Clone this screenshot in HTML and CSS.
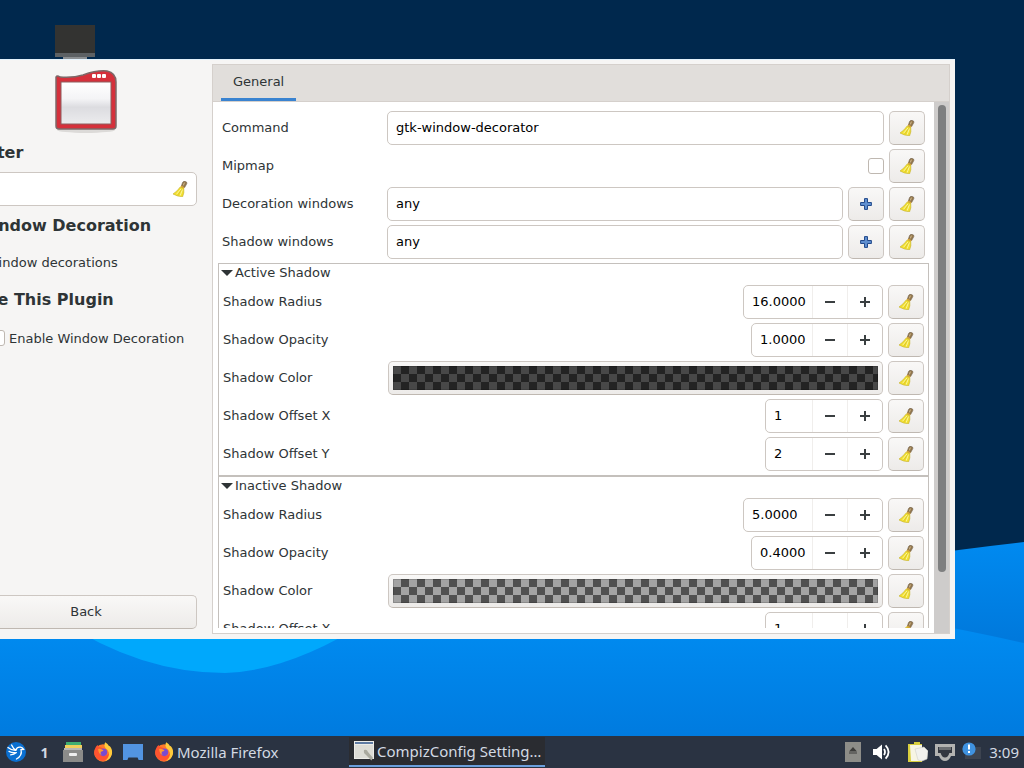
FILE: index.html
```html
<!DOCTYPE html>
<html lang="en">
<head>
    <meta charset="UTF-8">
    <meta name="viewport" content="width=device-width, initial-scale=1.0">
    <title>CompizConfig Settings Manager</title>
    <link rel="stylesheet" href="styles.css">
</head>
<body>

<!-- shared icons -->
<svg class="icon-defs" aria-hidden="true">
    <symbol id="broom" viewBox="0 0 16 16">
        <path d="M10.6 1.4 Q11.6 0 13.4 .4 Q15.2 .8 14.8 2.6 L12.6 6.6 L9.4 5 Z" fill="#94784c" stroke="#6b5a45" stroke-width=".6"/>
        <path d="M12.4 1.6 L11.4 4.4" stroke="#d9c39a" stroke-width=".9"/>
        <path d="M9.3 4.4 L12.6 6.2 L11.8 7.8 L8.2 6.2 Z" fill="#d8a53a"/>
        <path d="M8.2 6 L11.8 7.6 Q12.4 12 10.6 15.8 Q5 15.4 1 13 Q5.2 10.4 8.2 6 Z" fill="#f2df2e" stroke="#c2ae2a" stroke-width=".6"/>
        <path d="M9 8 L4.6 13.2 M10.4 8.6 L8.2 14.6" stroke="#fbf6a0" stroke-width="1"/>
        <path d="M9.6 8.4 L6 13.8" stroke="#c9b022" stroke-width=".5"/>
    </symbol>
    <symbol id="add" viewBox="0 0 12 12">
        <path d="M4.5 .6 H7.5 V4.5 H11.4 V7.5 H7.5 V11.4 H4.5 V7.5 H.6 V4.5 H4.5 Z" fill="#5f8fd0" stroke="#234a8c" stroke-linejoin="round"/>
    </symbol>
    <symbol id="minus" viewBox="0 0 12 12"><path d="M1 6 H11" stroke="#3a3f41" stroke-width="2"/></symbol>
    <symbol id="plus" viewBox="0 0 12 12"><path d="M1 6 H11 M6 1 V11" stroke="#3a3f41" stroke-width="2"/></symbol>
    <symbol id="firefox" viewBox="0 0 22 22">
        <circle cx="11" cy="12" r="9.6" fill="#ff7a2a"/>
        <path d="M2 8 Q3 5 5 3.4 Q5.4 5 7 5.6 Q10 6 12 8 Q8 8 8 10.4 Q8 14 12 15 Q17 15 18 11 Q18 18 12 20.6 Q4 21 1.6 14 Q1 10 2 8 Z" fill="#ff5430"/>
        <path d="M13.4 .4 Q16.4 2 17.6 4.4 L18.6 4.6 Q21.8 8.4 20.8 13.6 Q19 19.6 13.4 21 Q18.4 17 17.4 11.6 Q16.4 8.4 13.8 7 Q11.6 4 13.4 .4 Z" fill="#ffcb3c"/>
        <circle cx="11.4" cy="11.4" r="4.2" fill="#7a4bd0"/>
        <path d="M5.6 7.6 Q9 7 11.6 9.2 Q10.6 10.6 8.6 10.8 Q7.6 12.4 9.4 14 Q6 13.4 5.6 7.6 Z" fill="#ff9a2e"/>
    </symbol>
</svg>

<main class="desktop">
    <svg class="wallpaper" viewBox="0 0 1024 736" preserveAspectRatio="none" aria-hidden="true">
        <defs>
            <linearGradient id="sea" x1="0" y1="0" x2="0" y2="1">
                <stop offset="0" stop-color="#008ff5"/>
                <stop offset="1" stop-color="#007bdf"/>
            </linearGradient>
            <linearGradient id="ridge" x1="0" y1="0" x2="0" y2="1">
                <stop offset="0" stop-color="#008af0"/>
                <stop offset="1" stop-color="#0068c8"/>
            </linearGradient>
        </defs>
        <rect width="1024" height="736" fill="#00284d"/>
        <path d="M600 610 Q860 560 1024 542 V736 H600 Z" fill="url(#ridge)"/>
        <path d="M0 600 H800 Q930 622 1024 643 V736 H0 Z" fill="url(#sea)"/>
        <path d="M60 620 Q140 673 225 673 Q290 671 370 620 Z" fill="#00a8fc"/>
    </svg>

    <svg class="computer" viewBox="0 0 40 34" aria-hidden="true">
        <rect width="40" height="30" fill="#333331"/>
        <rect y="28" width="40" height="4" fill="#5d6164"/>
        <rect x="8" y="32" width="24" height="2" fill="#8b8f92"/>
    </svg>

    <section class="window">
        <aside class="sidebar">
            <svg class="plugin-icon" viewBox="0 0 62 64" aria-hidden="true">
                <defs>
                    <linearGradient id="pane" x1="0" y1="0" x2="0" y2="1">
                        <stop offset="0" stop-color="#ffffff"/>
                        <stop offset=".4" stop-color="#f4f4f6"/>
                        <stop offset=".6" stop-color="#dcdce0"/>
                        <stop offset="1" stop-color="#ececee"/>
                    </linearGradient>
                </defs>
                <ellipse cx="31" cy="60" rx="29" ry="3" fill="#dcdad8"/>
                <path d="M1 7 Q2 5 5 7 Q18 8 28 5 Q42 0 52 1 Q61 3 61 12 V56 Q61 59 58 59 H4 Q1 59 1 56 Z" fill="#d5303b" stroke="#7d6868" stroke-width="1.5"/>
                <rect x="6" y="12" width="50" height="42" fill="url(#pane)" stroke="#8d5c5e"/>
                <rect x="37" y="4" width="4" height="4" rx="1" fill="#fff"/>
                <rect x="42" y="4" width="4" height="4" rx="1" fill="#fff"/>
                <rect x="47" y="4" width="4" height="4" rx="1" fill="#fff"/>
            </svg>
            <h2><label for="filter">Filter</label></h2>
            <div class="filter-box">
                <input type="text" id="filter">
                <button class="clear" aria-label="Clear filter"><svg><use href="#broom"/></svg></button>
            </div>
            <h2>Window Decoration</h2>
            <p>Window decorations</p>
            <h2>Use This Plugin</h2>
            <div class="enable">
                <input type="checkbox" id="enable">
                <label for="enable">Enable Window Decoration</label>
            </div>
            <button class="back">Back</button>
        </aside>

        <div class="notebook">
            <nav class="tabs"><button class="tab">General</button></nav>
            <div class="page">
                <div class="settings">
                    <div class="rows">
                        <div class="row">
                            <label for="command">Command</label>
                            <div class="control"><input type="text" id="command" value="gtk-window-decorator"></div>
                            <button class="reset" aria-label="Reset"><svg><use href="#broom"/></svg></button>
                        </div>
                        <div class="row">
                            <label for="mipmap">Mipmap</label>
                            <div class="control"><input type="checkbox" id="mipmap"></div>
                            <button class="reset" aria-label="Reset"><svg><use href="#broom"/></svg></button>
                        </div>
                        <div class="row">
                            <label for="decoWindows">Decoration windows</label>
                            <div class="control">
                                <input type="text" id="decoWindows" value="any">
                                <button class="match" aria-label="Edit match"><svg><use href="#add"/></svg></button>
                            </div>
                            <button class="reset" aria-label="Reset"><svg><use href="#broom"/></svg></button>
                        </div>
                        <div class="row">
                            <label for="shadowWindows">Shadow windows</label>
                            <div class="control">
                                <input type="text" id="shadowWindows" value="any">
                                <button class="match" aria-label="Edit match"><svg><use href="#add"/></svg></button>
                            </div>
                            <button class="reset" aria-label="Reset"><svg><use href="#broom"/></svg></button>
                        </div>
                    </div>

                    <details class="group" open>
                        <summary>Active Shadow</summary>
                        <div class="rows">
                            <div class="row">
                                <label for="activeRadius">Shadow Radius</label>
                                <div class="control"><div class="spin">
                                    <input type="text" class="wide" id="activeRadius" value="16.0000">
                                    <button aria-label="Decrease"><svg><use href="#minus"/></svg></button>
                                    <button aria-label="Increase"><svg><use href="#plus"/></svg></button>
                                </div></div>
                                <button class="reset" aria-label="Reset"><svg><use href="#broom"/></svg></button>
                            </div>
                            <div class="row">
                                <label for="activeOpacity">Shadow Opacity</label>
                                <div class="control"><div class="spin">
                                    <input type="text" class="medium" id="activeOpacity" value="1.0000">
                                    <button aria-label="Decrease"><svg><use href="#minus"/></svg></button>
                                    <button aria-label="Increase"><svg><use href="#plus"/></svg></button>
                                </div></div>
                                <button class="reset" aria-label="Reset"><svg><use href="#broom"/></svg></button>
                            </div>
                            <div class="row">
                                <label for="activeColor">Shadow Color</label>
                                <div class="control"><button class="color" id="activeColor"><span class="swatch dark"></span></button></div>
                                <button class="reset" aria-label="Reset"><svg><use href="#broom"/></svg></button>
                            </div>
                            <div class="row">
                                <label for="activeX">Shadow Offset X</label>
                                <div class="control"><div class="spin">
                                    <input type="text" class="narrow" id="activeX" value="1">
                                    <button aria-label="Decrease"><svg><use href="#minus"/></svg></button>
                                    <button aria-label="Increase"><svg><use href="#plus"/></svg></button>
                                </div></div>
                                <button class="reset" aria-label="Reset"><svg><use href="#broom"/></svg></button>
                            </div>
                            <div class="row">
                                <label for="activeY">Shadow Offset Y</label>
                                <div class="control"><div class="spin">
                                    <input type="text" class="narrow" id="activeY" value="2">
                                    <button aria-label="Decrease"><svg><use href="#minus"/></svg></button>
                                    <button aria-label="Increase"><svg><use href="#plus"/></svg></button>
                                </div></div>
                                <button class="reset" aria-label="Reset"><svg><use href="#broom"/></svg></button>
                            </div>
                        </div>
                    </details>

                    <details class="group" open>
                        <summary>Inactive Shadow</summary>
                        <div class="rows">
                            <div class="row">
                                <label for="inactiveRadius">Shadow Radius</label>
                                <div class="control"><div class="spin">
                                    <input type="text" class="wide" id="inactiveRadius" value="5.0000">
                                    <button aria-label="Decrease"><svg><use href="#minus"/></svg></button>
                                    <button aria-label="Increase"><svg><use href="#plus"/></svg></button>
                                </div></div>
                                <button class="reset" aria-label="Reset"><svg><use href="#broom"/></svg></button>
                            </div>
                            <div class="row">
                                <label for="inactiveOpacity">Shadow Opacity</label>
                                <div class="control"><div class="spin">
                                    <input type="text" class="medium" id="inactiveOpacity" value="0.4000">
                                    <button aria-label="Decrease"><svg><use href="#minus"/></svg></button>
                                    <button aria-label="Increase"><svg><use href="#plus"/></svg></button>
                                </div></div>
                                <button class="reset" aria-label="Reset"><svg><use href="#broom"/></svg></button>
                            </div>
                            <div class="row">
                                <label for="inactiveColor">Shadow Color</label>
                                <div class="control"><button class="color" id="inactiveColor"><span class="swatch light"></span></button></div>
                                <button class="reset" aria-label="Reset"><svg><use href="#broom"/></svg></button>
                            </div>
                            <div class="row">
                                <label for="inactiveX">Shadow Offset X</label>
                                <div class="control"><div class="spin">
                                    <input type="text" class="narrow" id="inactiveX" value="1">
                                    <button aria-label="Decrease"><svg><use href="#minus"/></svg></button>
                                    <button aria-label="Increase"><svg><use href="#plus"/></svg></button>
                                </div></div>
                                <button class="reset" aria-label="Reset"><svg><use href="#broom"/></svg></button>
                            </div>
                        </div>
                    </details>
                </div>
                <div class="scrollbar"><div class="thumb"></div></div>
            </div>
        </div>
    </section>
</main>

<footer class="taskbar">
    <button class="launcher" aria-label="Menu">
        <svg viewBox="0 0 20 20">
            <circle cx="10" cy="10" r="10" fill="#0a6fd0"/>
            <path d="M2 5.4 Q6 8.6 9.6 8.4 M3 9.4 Q6 11 9 10.6 M4.6 12.8 Q8 12.8 10.4 10.6 M5.6 3 Q7 6.6 10 8 Q11 4.8 14.4 5.2 Q16.4 5.6 17.6 7.4 L15 7.6 Q16.6 13.6 10.4 17" fill="none" stroke="#fff" stroke-width="1.3" stroke-linecap="round"/>
        </svg>
    </button>
    <button class="pager">1</button>
    <button class="launcher" aria-label="File manager">
        <svg viewBox="0 0 20 20">
            <rect x="3" y="0" width="15" height="3" fill="#3fae72"/>
            <rect x="2" y="3" width="17" height="3" fill="#f0cf5c"/>
            <rect x="1" y="6" width="18" height="3" fill="#b7b7b5"/>
            <rect x="0" y="8" width="20" height="12" fill="#8b8b89"/>
            <rect x="6" y="11" width="8" height="3" rx="1" fill="#eee"/>
        </svg>
    </button>
    <button class="launcher" aria-label="Firefox"><svg><use href="#firefox"/></svg></button>
    <button class="launcher" aria-label="Show desktop">
        <svg viewBox="0 0 20 20">
            <path d="M0 2 H20 V18 H15.6 L14.6 15.6 H5.4 L4.4 18 H0 Z" fill="#5294e2"/>
        </svg>
    </button>
    <button class="task">
        <svg><use href="#firefox"/></svg>
        <span>Mozilla Firefox</span>
    </button>
    <button class="task active">
        <svg viewBox="0 0 20 20">
            <rect width="20" height="18" fill="#ecece8"/>
            <rect x="1" y="1" width="18" height="2" fill="#5f7ba3"/>
            <rect x="1" y="4" width="18" height="13" fill="#dcdcd6"/>
            <path d="M10 9 Q13 8 14 11 L19 17 L17.4 19.4 L11.6 13.4 Q9.4 12.6 10 9 Z" fill="#a9a99f"/>
        </svg>
        <span>CompizConfig Setting…</span>
    </button>
    <div class="tray">
        <svg class="eject" viewBox="0 0 16 20">
            <rect width="16" height="20" fill="#8d8d88"/>
            <path d="M8 5 L12 9.4 H4 Z M4 10.4 H12 V11.6 H4 Z" fill="#3c3c3a"/>
        </svg>
        <svg class="volume" viewBox="0 0 18 18">
            <path d="M0 6 H3.6 L9 1.4 V16.6 L3.6 12 H0 Z" fill="#fff"/>
            <path d="M11 6 Q13 9 11 12 M12.6 2.4 Q18.6 9 12.6 15.6" fill="none" stroke="#fff" stroke-width="1.8"/>
        </svg>
        <svg viewBox="0 0 20 20">
            <path d="M0 2 H6 V0 H12 V2 H14 V20 H0 Z" fill="#d9cf3e"/>
            <path d="M2 3 H14 V19 H3 Z" fill="#f7f5e4"/>
            <path d="M7 7 L16 5 L20 9 L19 17 L14 19 L10 18 Z" fill="#f2f2ee" stroke="#d0d0ca" stroke-width=".6"/>
        </svg>
        <svg viewBox="0 0 20 20">
            <path d="M0 2 H20 V14 H16 Q14 19 10 19 Q6 19 4 14 H0 Z" fill="#b3b3b1"/>
            <path d="M3 5 H17 V11 H14.4 Q13 15.6 10 15.6 Q7 15.6 5.6 11 H3 Z" fill="#33373f"/>
            <path d="M5 5 V8 M7 5 V8 M9 5 V8 M11 5 V8 M13 5 V8 M15 5 V8" stroke="#c4c4c0" stroke-width=".8"/>
        </svg>
        <svg viewBox="0 0 20 20">
            <rect x="3" y="5" width="16" height="12" fill="#3d4450"/>
            <circle cx="7" cy="7" r="6.6" fill="#3f92e0"/>
            <path d="M7 2.6 V7.6 M7 9 V11" stroke="#fff" stroke-width="2"/>
        </svg>
        <time>3:09</time>
    </div>
</footer>

</body>
</html>
```
FILE: styles.css
```css
* {
    box-sizing: border-box;
}

body {
    font-family: "DejaVu Sans", sans-serif;
    font-size: 13px;
    color: #2e3436;
    display: flex;
    flex-direction: column;
    height: 100vh;
    margin: 0;
    overflow: hidden;
}

button,
input {
    font: inherit;
    color: inherit;
    margin: 0;
}

button {
    padding: 0;
    border: none;
    background: none;
}

svg {
    display: block;
    flex: none;
}

.icon-defs {
    position: absolute;
    width: 0;
    height: 0;
}

/* desktop */
.desktop {
    flex: 1;
    position: relative;
    overflow: hidden;
    background-color: #00284d;
}

.wallpaper {
    position: absolute;
    width: 100%;
    height: 100%;
}

.computer {
    position: absolute;
    left: 55px;
    top: 25px;
    width: 40px;
}

/* the window hangs over the left edge of the desktop */
.window {
    position: absolute;
    top: 59px;
    right: 69px;
    bottom: 97px;
    left: -30px;
    display: flex;
    gap: 15px;
    padding: 4px 5px 5px;
    background-color: #f6f5f4;
    border-top: 1px solid #e4f2fc;
}

.sidebar {
    flex: none;
    width: 222px;
    display: flex;
    flex-direction: column;
    padding-bottom: 5px;
}

.plugin-icon {
    width: 62px;
    height: 64px;
    margin: 6px auto 0;
}

.sidebar h2 {
    margin: 0;
    font-size: 16px;
    line-height: 38px;
}

.sidebar p {
    margin: 0;
    padding-left: 11px;
    line-height: 36px;
}

.filter-box {
    display: flex;
    align-items: center;
    height: 34px;
    margin: 0 0 1px 12px;
    padding-right: 8px;
    background-color: #fff;
    border: 1px solid #cdc7c2;
    border-radius: 5px;
}

.filter-box input {
    flex: 1;
    min-width: 0;
    border: none;
    background: none;
}

.clear svg,
.reset svg {
    width: 16px;
    height: 16px;
}

.enable {
    display: flex;
    align-items: center;
    gap: 4px;
    height: 38px;
    padding-left: 14px;
}

input[type="checkbox"] {
    appearance: none;
    width: 16px;
    height: 16px;
    background-color: #fff;
    border: 1px solid #bfb8b1;
    border-radius: 3px;
}

.back,
.reset,
.match,
.color {
    height: 34px;
    background: linear-gradient(#f9f8f7, #edebe9);
    border: 1px solid #cdc7c2;
    border-bottom-color: #bfb8b1;
    border-radius: 5px;
}

.back {
    margin-top: auto;
    padding-bottom: 2px;
}

/* notebook */
.notebook {
    flex: 1;
    min-width: 0;
    display: flex;
    flex-direction: column;
    border: 1px solid #d5d0cc;
}

.tabs {
    height: 37px;
    padding-left: 8px;
    background-color: #e1dedb;
    border-bottom: 1px solid #d5d0cc;
}

.tab {
    height: 36px;
    padding: 0 12px;
    border-bottom: 3px solid #3a83d0;
}

.page {
    flex: 1;
    min-height: 0;
    display: flex;
    background-color: #fff;
}

.settings {
    flex: 1;
    min-width: 0;
    margin: 5px;
    overflow: hidden;
}

.rows {
    display: flex;
    flex-direction: column;
    gap: 4px;
    padding: 4px;
}

.row {
    display: grid;
    grid-template-columns: 160px 1fr 36px;
    gap: 5px;
    align-items: center;
}

.row > label {
    line-height: 16px;
}

.control {
    display: flex;
    align-items: center;
    justify-content: flex-end;
    gap: 5px;
    height: 34px;
}

.control > input[type="text"] {
    flex: 1;
    min-width: 0;
    height: 34px;
    padding: 0 8px 2px;
    color: #000;
    background-color: #fff;
    border: 1px solid #cdc7c2;
    border-radius: 5px;
}

.reset,
.match {
    display: flex;
    align-items: center;
    justify-content: center;
    width: 36px;
}

.match svg,
.spin svg {
    width: 12px;
    height: 12px;
}

.group {
    border: 1px solid #c4c0bc;
}

.group summary {
    display: flex;
    align-items: center;
    gap: 2px;
    height: 17px;
    padding-left: 2px;
    line-height: 17px;
}

.group summary::before {
    content: "";
    border: 6px solid transparent;
    border-top-color: #2e3436;
    border-bottom: none;
}

.spin {
    display: flex;
    height: 34px;
    background-color: #fff;
    border: 1px solid #cdc7c2;
    border-radius: 5px;
}

.spin input {
    padding: 0 0 2px 8px;
    color: #000;
    border: none;
    background: none;
}

.spin .wide {
    width: 68px;
}

.spin .medium {
    width: 60px;
}

.spin .narrow {
    width: 46px;
}

.spin button {
    display: flex;
    align-items: center;
    justify-content: center;
    width: 35px;
    border-left: 1px solid #f0eeec;
}

.color {
    flex: 1;
    padding: 4px;
}

.swatch {
    display: block;
    height: 24px;
    background-size: 16px 16px;
    box-shadow: inset 0 0 0 1px rgba(0, 0, 0, 0.15);
}

.swatch.dark {
    background-image: repeating-conic-gradient(#232323 0 25%, #484848 0 50%);
}

.swatch.light {
    background-image: repeating-conic-gradient(#505050 0 25%, #a3a3a3 0 50%);
}

.scrollbar {
    width: 15px;
    padding: 3px 3px 3px 4px;
    background-color: #cecccb;
}

.thumb {
    width: 8px;
    height: 89%;
    background-color: #7e7f80;
    border-radius: 4px;
}

/* taskbar */
.taskbar {
    flex: none;
    display: flex;
    align-items: center;
    height: 32px;
    padding: 0 5px 0 6px;
    font-family: "Noto Sans", sans-serif;
    font-size: 15px;
    color: #d3dae3;
    background-color: #2a3342;
}

.taskbar svg {
    width: 20px;
    height: 20px;
}

.launcher {
    margin-right: 10px;
}

.pager {
    width: 17px;
    margin-right: 10px;
    font-size: 14px;
    font-weight: bold;
}

.task {
    display: flex;
    align-items: center;
    gap: 3px;
    width: 196px;
    height: 30px;
    padding-left: 1px;
    line-height: 20px;
}

.task.active {
    padding-left: 5px;
    background-color: #2a2c31;
    border-bottom: 2px solid #6a9fdc;
}

.tray {
    display: flex;
    align-items: center;
    gap: 7px;
    margin-left: auto;
}

.tray .eject {
    width: 16px;
    margin-right: 5px;
}

.tray .volume {
    width: 18px;
    height: 18px;
    margin-right: 10px;
}
```
